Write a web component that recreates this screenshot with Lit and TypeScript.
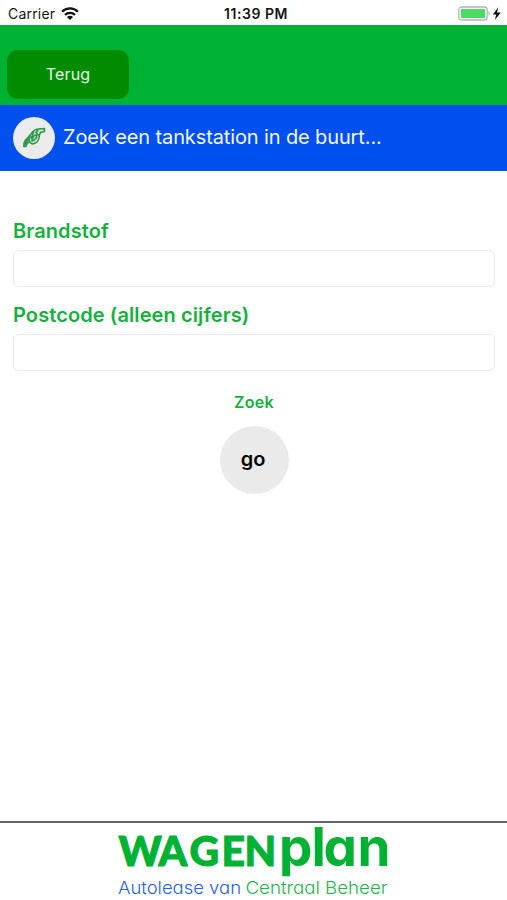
import { LitElement, html, css } from "lit";
import { customElement } from "lit/decorators.js";

@customElement("status-bar")
class StatusBar extends LitElement {
  static styles = css`
    :host { display: grid; grid-template-columns: 1fr auto 1fr; align-items: center; height: 25px; padding: 2px 5px 0 8px; box-sizing: border-box; background: #fff; color: #151515; font-size: 14px; line-height: 23px; }
    .left { display: flex; align-items: center; gap: 6px; letter-spacing: 0.2px; }
    .time { font-weight: 600; letter-spacing: 0.55px; padding-left: 2px; }
    .right { display: flex; justify-content: flex-end; align-items: center; }
    svg { display: block; }
  `;
  render() {
    return html`
      <div class="left">
        <span>Carrier</span>
        <svg width="18" height="13" viewBox="0 0 18 13">
          <g fill="none" stroke="#111" stroke-width="2.3">
            <path d="M1.1 4.8C5.5.3 12.5.3 16.9 4.8"/>
            <path d="M4 7.9c2.8-2.7 7.2-2.7 10 0"/>
          </g>
          <path d="M6 9.9c1.7-1.5 4.3-1.5 6 0l-3 3z" fill="#111"/>
        </svg>
      </div>
      <span class="time">11:39 PM</span>
      <div class="right">
        <svg width="44" height="16" viewBox="0 0 44 16">
          <rect x=".8" y="1" width="28.4" height="13" rx="3" fill="#fff" stroke="#b5b5b5" stroke-width="1.3"/>
          <rect x="2.8" y="3" width="24.4" height="9" rx="1" fill="#4cd964"/>
          <path d="M30.5 5.3c1.6.6 1.6 3.8 0 4.4z" fill="#aaa"/>
          <path d="M40.3 1.300 34.800 8.400h3.400l-1.300 5.600 5.900-7.400h-3.700z" fill="#111"/>
        </svg>
      </div>`;
  }
}

@customElement("wagenplan-logo")
class WagenplanLogo extends LitElement {
  static styles = css`
    :host { display: block; }
    svg { display: block; margin: 0 auto; overflow: visible; }
    text { font-family: Inter, "Open Sans", sans-serif; font-feature-settings: "cv11" 1; }
    .caps { font-family: Lato, sans-serif; font-size: 41px; font-weight: 900; fill: #00b233; stroke: #00b233; stroke-width: 1px; }
    .lower { font-size: 53px; font-weight: 650; fill: #00b233; }
    .tag { font-size: 17.4px; font-weight: 300; }
    .blue { fill: #2260ee; }
    .green { fill: #1bb64a; }
  `;
  render() {
    return html`
      <svg width="507" height="77" viewBox="0 823 507 77">
        <text class="caps" x="118.5 158.500 189.500 221.500 244.500" y="865.5">WAGEN</text>
        <text class="lower" x="279 311.500 323.500 357.500" y="866">plan</text>
        <text class="tag blue" x="118" y="893.5" textLength="123" lengthAdjust="spacingAndGlyphs">Autolease van</text>
        <text class="tag green" x="245.5" y="893.5" textLength="142" lengthAdjust="spacingAndGlyphs">Centraal Beheer</text>
      </svg>`;
  }
}

@customElement("app-root")
class AppRoot extends LitElement {
  static styles = css`
    :host { display: flex; flex-direction: column; width: 507px; height: 900px; background: #fff; font-family: Inter, "Liberation Sans", sans-serif; overflow: hidden; }
    button, input { font: inherit; box-sizing: border-box; margin: 0; }
    .toolbar { height: 80px; box-sizing: border-box; padding: 25px 7px 0; background: #00b233; }
    .back { display: block; width: 122px; height: 49px; border: 0; border-radius: 11px; background: #008c00; color: #e6f6e3; font-size: 16px; letter-spacing: 0.2px; padding: 0 0 1px; }
    .banner { display: flex; align-items: center; gap: 8px; height: 66px; box-sizing: border-box; padding: 0 13px; background: #0050f0; color: #f4f7ff; font-size: 20px; }
    .badge { display: flex; align-items: center; justify-content: center; width: 42px; height: 42px; border-radius: 50%; background: #ebebeb; }
    .title { letter-spacing: -0.12px; white-space: nowrap; padding-bottom: 2px; }
    .form { flex: 1; display: flex; flex-direction: column; padding: 47px 12px 0 13px; color: #14b23c; }
    .label { font-size: 20px; font-weight: 600; line-height: 26px; letter-spacing: 0.1px; white-space: nowrap; }
    .field { width: 482px; height: 37px; border: 1px solid #ebebeb; border-radius: 6px; background: #fff; margin: 6px 0 15px; padding: 0 8px; outline: none; }
    .action { display: flex; flex-direction: column; align-items: center; gap: 14px; padding-top: 6px; }
    .caption { font-size: 16px; font-weight: 600; line-height: 20px; letter-spacing: 0.3px; }
    .go { width: 69px; height: 68px; border: 0; border-radius: 50%; background: #eaeaea; color: #080808; font-size: 20px; font-weight: 600; padding: 0 2px 2px 0; }
    .footer { height: 79px; box-sizing: border-box; border-top: 2px solid #666; }
  `;
  render() {
    return html`
      <status-bar></status-bar>
      <div class="toolbar"><button class="back">Terug</button></div>
      <div class="banner">
        <span class="badge">
          <svg width="24" height="22" viewBox="0 0 24 22" fill="none" stroke="#2b9848" stroke-width="1.6" stroke-linejoin="round" stroke-linecap="round">
            <path d="M1.800 19.500 2.200 15.500C3 13 5 11.500 6.500 10L11 4.500C12.500 2.800 14 2 16 2L22.500 1.500V4.500L18.500 5.500 17.300 8.500C17.500 12 15.500 15.500 12.500 16.500 10.500 17.200 8.500 16.500 7.500 14.800 5.500 15.500 4.300 17 3.800 19.500Z" fill="#2b9848" fill-opacity=".15"/>
            <path d="M6.500 10.500 7.500 14.800M11.500 5 9.500 11M16 2.500 14 5.500 17 8.500M10 14C10 11 12 7.500 14.500 8 15.500 10 13 13.500 10 14Z"/>
            <path d="M3 17.500C4 14 6 12.500 8 10" stroke-width="2"/>
          </svg>
        </span>
        <span class="title">Zoek een tankstation in de buurt...</span>
      </div>
      <div class="form">
        <label class="label" for="fuel">Brandstof</label>
        <input class="field" id="fuel">
        <label class="label" for="zip">Postcode (alleen cijfers)</label>
        <input class="field" id="zip">
        <div class="action">
          <span class="caption">Zoek</span>
          <button class="go">go</button>
        </div>
      </div>
      <div class="footer"><wagenplan-logo></wagenplan-logo></div>`;
  }
}
